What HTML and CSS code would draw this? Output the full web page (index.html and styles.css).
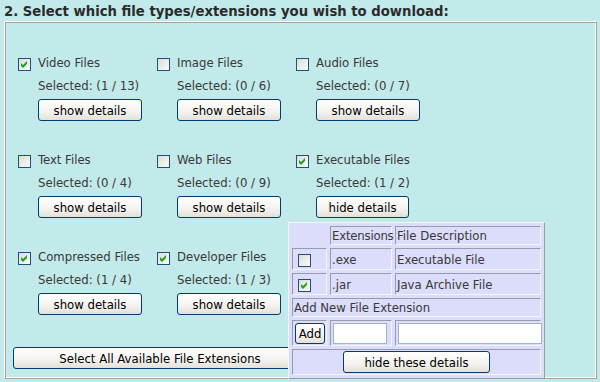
FILE: index.html
```html
<!DOCTYPE html>
<html lang="en">
<head>
  <meta charset="UTF-8">
  <title>File Types</title>
  <link rel="stylesheet" href="styles.css">
</head>
<body>

<h2 class="title">2. Select which file types/extensions you wish to download:</h2>

<div class="box">
  <div class="types">

    <div class="type">
      <span class="cb checked"><svg viewBox="0 0 11 11"><polygon points="2,4 4,6 8,2 8,5 4,9 2,7"/></svg></span>
      <div class="info">
        <div class="name">Video Files</div>
        <div class="count">Selected: (1 / 13)</div>
        <button class="btn details">show details</button>
      </div>
    </div>

    <div class="type">
      <span class="cb"></span>
      <div class="info">
        <div class="name">Image Files</div>
        <div class="count">Selected: (0 / 6)</div>
        <button class="btn details">show details</button>
      </div>
    </div>

    <div class="type">
      <span class="cb"></span>
      <div class="info">
        <div class="name">Audio Files</div>
        <div class="count">Selected: (0 / 7)</div>
        <button class="btn details">show details</button>
      </div>
    </div>

    <div class="type">
      <span class="cb"></span>
      <div class="info">
        <div class="name">Text Files</div>
        <div class="count">Selected: (0 / 4)</div>
        <button class="btn details">show details</button>
      </div>
    </div>

    <div class="type">
      <span class="cb"></span>
      <div class="info">
        <div class="name">Web Files</div>
        <div class="count">Selected: (0 / 9)</div>
        <button class="btn details">show details</button>
      </div>
    </div>

    <div class="type open">
      <span class="cb checked"><svg viewBox="0 0 11 11"><polygon points="2,4 4,6 8,2 8,5 4,9 2,7"/></svg></span>
      <div class="info">
        <div class="name">Executable Files</div>
        <div class="count">Selected: (1 / 2)</div>
        <button class="btn details hide">hide details</button>
      </div>

      <!-- popup with the extensions of this type -->
      <div class="panel">
        <table class="ext-table">
          <tr class="head">
            <th class="col-cb"></th>
            <th class="col-ext">Extensions</th>
            <th class="col-desc">File Description</th>
          </tr>
          <tr class="row">
            <td><span class="cb"></span></td>
            <td>.exe</td>
            <td>Executable File</td>
          </tr>
          <tr class="row">
            <td><span class="cb checked"><svg viewBox="0 0 11 11"><polygon points="2,4 4,6 8,2 8,5 4,9 2,7"/></svg></span></td>
            <td>.jar</td>
            <td>Java Archive File</td>
          </tr>
          <tr class="head">
            <td colspan="3">Add New File Extension</td>
          </tr>
          <tr class="add-row">
            <td><button class="btn add">Add</button></td>
            <td><input type="text" class="ext-input"></td>
            <td><input type="text" class="desc-input"></td>
          </tr>
          <tr class="add-row">
            <td colspan="3" class="center"><button class="btn hide-all">hide these details</button></td>
          </tr>
        </table>
      </div>
    </div>

    <div class="type">
      <span class="cb checked"><svg viewBox="0 0 11 11"><polygon points="2,4 4,6 8,2 8,5 4,9 2,7"/></svg></span>
      <div class="info">
        <div class="name">Compressed Files</div>
        <div class="count">Selected: (1 / 4)</div>
        <button class="btn details">show details</button>
      </div>
    </div>

    <div class="type">
      <span class="cb checked"><svg viewBox="0 0 11 11"><polygon points="2,4 4,6 8,2 8,5 4,9 2,7"/></svg></span>
      <div class="info">
        <div class="name">Developer Files</div>
        <div class="count">Selected: (1 / 3)</div>
        <button class="btn details">show details</button>
      </div>
    </div>

  </div>

  <button class="btn select-all">Select All Available File Extensions</button>
</div>

</body>
</html>
```

FILE: styles.css
```css
* {
  box-sizing: border-box;
}

html, body {
  margin: 0;
  padding: 0;
  background: #c2eaea;
  font-family: "DejaVu Sans Condensed", "DejaVu Sans", sans-serif;
  font-size: 13px;
  color: #383838;
  overflow: hidden;
}

.title {
  margin: 0;
  padding: 2px 4px 0;
  font-size: 14.7px;
  line-height: 18px;
  font-weight: bold;
  color: #2b2b2b;
}

.box {
  margin: 2px 3px 0 5px;
  height: 357px;
  border: 1px solid #a9a295;
  box-shadow: -1px -1px 0 #fff, inset -1px -1px 0 #fff;
  padding: 33px 7px 0;
}

.types {
  display: grid;
  grid-template-columns: repeat(3, 139px);
  row-gap: 32px;
  margin-left: 5px;
}

.type {
  display: flex;
  align-items: flex-start;
}

.type.open {
  position: relative;
}

.info {
  display: flex;
  flex-direction: column;
  align-items: flex-start;
  white-space: nowrap;
}

.name {
  line-height: 14px;
}

.count {
  line-height: 14px;
  margin-top: 9px;
}

/* xp style checkbox */
.cb {
  display: inline-block;
  width: 13px;
  height: 13px;
  margin: 2px 7px 0 0;
  border: 1px solid #1c5180;
  background: linear-gradient(135deg, #dcdcd7, #fbfbf9);
  flex: none;
}

.cb svg {
  display: block;
  width: 11px;
  height: 11px;
  fill: #21a121;
}

.btn {
  font-family: inherit;
  font-size: 13px;
  color: #000;
  height: 22px;
  padding: 0;
  border: 1px solid #003c74;
  border-radius: 3px;
  background: linear-gradient(#ffffff, #f3f2ee 60%, #e3e0d8);
  cursor: pointer;
  white-space: nowrap;
}

.details {
  width: 104px;
  margin-top: 6px;
}

.details.hide {
  width: 93px;
}

.select-all {
  width: 294px;
  margin-top: 32px;
  display: block;
}

.panel {
  position: absolute;
  left: -8px;
  top: calc(100% + 4px);
  z-index: 2;
}

.ext-table {
  width: 257px;
  table-layout: fixed;
  border-spacing: 3px;
  empty-cells: hide;
  background: #dcdcfb;
  border: 1px solid;
  border-color: #f4f4ff #9a9aae #9a9aae #f4f4ff;
}

.ext-table th,
.ext-table td {
  font-size: 13px;
  font-weight: normal;
  text-align: left;
  padding: 0 1px;
  border: 1px solid;
  border-color: #9a9aae #f4f4ff #f4f4ff #9a9aae;
  vertical-align: middle;
  white-space: nowrap;
}

.col-cb {
  width: 35px;
}

.col-ext {
  width: 62px;
  letter-spacing: -0.2px;
}

.head th,
.head td {
  height: 19px;
}

.row td {
  height: 22px;
}

.row .cb {
  margin: 0 0 0 4px;
  vertical-align: middle;
}

.add-row td {
  height: 26px;
}

.add {
  width: 30px;
  height: 21px;
  margin-left: 1px;
  vertical-align: middle;
}

.ext-input,
.desc-input {
  height: 21px;
  border: 1px solid #9fb4cc;
  background: #fff;
  vertical-align: middle;
  font-family: inherit;
  font-size: 12px;
}

.ext-input {
  width: 54px;
  margin-left: 1px;
}

.desc-input {
  width: 144px;
  margin-left: 1px;
}

.ext-table .center {
  text-align: center;
}

.hide-all {
  width: 147px;
}
```
